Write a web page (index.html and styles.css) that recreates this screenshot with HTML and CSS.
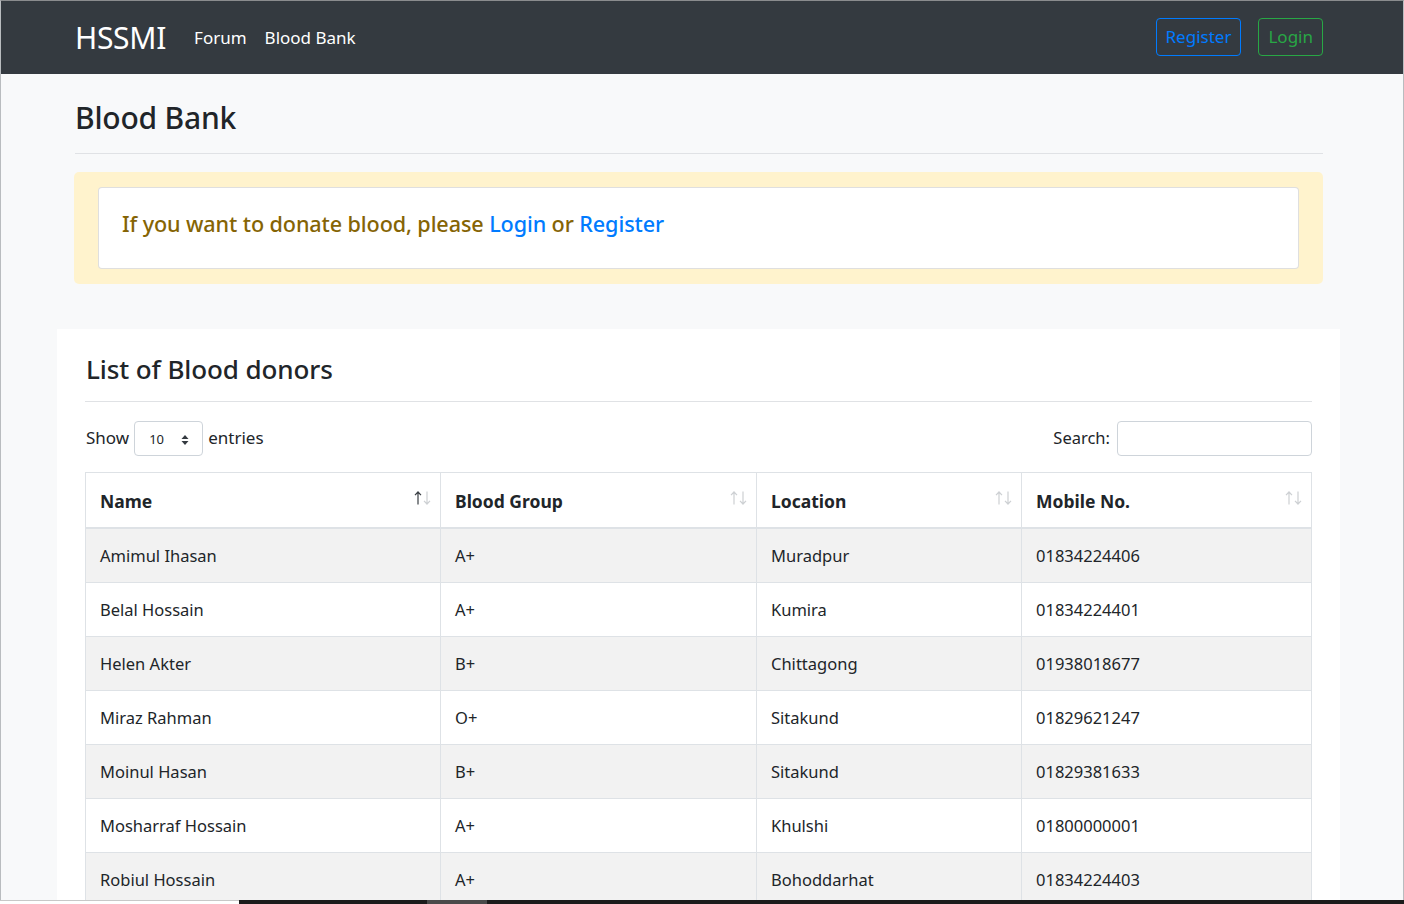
FILE: index.html
```html
<!DOCTYPE html>
<html lang="en">
<head>
<meta charset="utf-8">
<title>HSSMI - Blood Bank</title>
<link rel="stylesheet" href="styles.css">
</head>
<body>
<nav class="navbar">
  <div class="nav-inner">
    <a class="brand" href="#">HSSMI</a>
    <ul class="nav-links">
      <li><a href="#">Forum</a></li>
      <li><a href="#">Blood Bank</a></li>
    </ul>
    <div class="nav-actions">
      <a class="btn btn-blue" href="#">Register</a>
      <a class="btn btn-green" href="#">Login</a>
    </div>
  </div>
</nav>

<main>
  <div class="container">
    <h1 class="page-title">Blood Bank</h1>
    <hr class="rule">
    <div class="alert">
      <div class="alert-card">
        <h4 class="alert-text">If you want to donate blood, please <a href="#">Login</a> or <a href="#">Register</a></h4>
      </div>
    </div>
  </div>

  <section class="panel">
    <h3 class="panel-title">List of Blood donors</h3>
    <hr class="rule">
    <div class="controls">
      <label class="length">Show
        <span class="select">10
          <svg class="select-arrows" width="8" height="12" viewBox="0 0 8 12"><path d="M4 1 L7.5 5 H0.5 Z M4 11 L7.5 7 H0.5 Z" fill="#343a40"/></svg>
        </span>
        entries</label>
      <label class="search">Search: <span class="search-input"></span></label>
    </div>
    <table class="donors">
      <colgroup>
        <col class="c1"><col class="c2"><col class="c3"><col class="c4">
      </colgroup>
      <thead>
        <tr>
          <th class="sorted">Name<svg class="sort" width="17" height="14" viewBox="0 0 17 14"><path class="up" d="M4 13.5 V1 M1 4.2 L4 1 L7 4.2"/><path class="down" d="M13 0.5 V13 M10 9.8 L13 13 L16 9.8"/></svg></th>
          <th>Blood Group<svg class="sort" width="17" height="14" viewBox="0 0 17 14"><path class="up" d="M4 13.5 V1 M1 4.2 L4 1 L7 4.2"/><path class="down" d="M13 0.5 V13 M10 9.8 L13 13 L16 9.8"/></svg></th>
          <th>Location<svg class="sort" width="17" height="14" viewBox="0 0 17 14"><path class="up" d="M4 13.5 V1 M1 4.2 L4 1 L7 4.2"/><path class="down" d="M13 0.5 V13 M10 9.8 L13 13 L16 9.8"/></svg></th>
          <th>Mobile No.<svg class="sort" width="17" height="14" viewBox="0 0 17 14"><path class="up" d="M4 13.5 V1 M1 4.2 L4 1 L7 4.2"/><path class="down" d="M13 0.5 V13 M10 9.8 L13 13 L16 9.8"/></svg></th>
        </tr>
      </thead>
      <tbody>
        <tr><td>Amimul Ihasan</td><td>A+</td><td>Muradpur</td><td>01834224406</td></tr>
        <tr><td>Belal Hossain</td><td>A+</td><td>Kumira</td><td>01834224401</td></tr>
        <tr><td>Helen Akter</td><td>B+</td><td>Chittagong</td><td>01938018677</td></tr>
        <tr><td>Miraz Rahman</td><td>O+</td><td>Sitakund</td><td>01829621247</td></tr>
        <tr><td>Moinul Hasan</td><td>B+</td><td>Sitakund</td><td>01829381633</td></tr>
        <tr><td>Mosharraf Hossain</td><td>A+</td><td>Khulshi</td><td>01800000001</td></tr>
        <tr><td>Robiul Hossain</td><td>A+</td><td>Bohoddarhat</td><td>01834224403</td></tr>
      </tbody>
    </table>
  </section>
</main>

<div class="taskbar"><span class="tb-left"></span><span class="tb-dark"></span><span class="tb-mid"></span><span class="tb-dark2"></span></div>
</body>
</html>
```

FILE: styles.css
```css
* { box-sizing: border-box; }

html, body {
  margin: 0;
  padding: 0;
}

body {
  font-family: "Noto Sans", "Open Sans", sans-serif;
  font-size: 16px;
  line-height: 1.5;
  color: #212529;
  background: #f8f9fa;
  border-top: 1px solid #8a8c8e;
  border-left: 1px solid #b9bcbf;
  border-right: 1px solid #b9bcbf;
  min-height: 904px;
}

a { text-decoration: none; }

/* navbar */
.navbar {
  background: #343a40;
  height: 73px;
}
.nav-inner {
  width: 1248px;
  margin-left: 74px;
  height: 100%;
  display: flex;
  align-items: center;
}
.brand {
  color: #fff;
  font-size: 30px;
  line-height: 1;
  font-weight: 400;
  letter-spacing: -0.3px;
  margin-right: 28px;
  margin-top: 1px;
}
.nav-links {
  list-style: none;
  margin: 0;
  padding: 0;
  display: flex;
  gap: 18px;
}
.nav-links a {
  color: #fff;
  font-size: 17px;
}
.nav-actions {
  margin-left: auto;
  display: flex;
  gap: 17px;
  margin-top: -1px;
}
.btn {
  display: inline-block;
  height: 38px;
  padding: 0 9px;
  line-height: 36px;
  border: 1px solid;
  border-radius: 4px;
  font-size: 17px;
}
.btn-blue { color: #007bff; border-color: #007bff; }
.btn-green { color: #28a745; border-color: #28a745; }

/* header area */
.container {
  width: 1249px;
  margin-left: 73px;
}
.page-title {
  margin: 26px 0 0 1px;
  font-size: 30px;
  line-height: 36px;
  font-weight: 500;
  letter-spacing: -0.2px;
}
.rule {
  border: 0;
  border-top: 1px solid #e0e2e5;
  margin: 0;
}
.container .rule { margin: 17px 0 18px 1px; }

.alert {
  background: #fff3cd;
  border-radius: 5px;
  padding: 15px 24px 15px 24px;
}
.alert-card {
  background: #fff;
  border: 1px solid rgba(0,0,0,.125);
  border-radius: 4px;
  padding: 18px 23px 27px;
}
.alert-text {
  margin: 0;
  font-size: 21.6px;
  line-height: 35px;
  font-weight: 500;
  color: #856404;
  letter-spacing: -0.1px;
}
.alert-text a { color: #007bff; }

/* panel */
.panel {
  background: #fff;
  width: 1283px;
  margin: 45px 0 0 56px;
  padding: 22px 28px 40px 28px;
}
.panel-title {
  margin: 0 0 0 1px;
  font-size: 26px;
  line-height: 36px;
  font-weight: 500;
  letter-spacing: -0.1px;
}
.panel .rule { margin: 14px 0 19px; }

.controls {
  display: flex;
  justify-content: space-between;
  align-items: center;
  height: 35px;
  margin-bottom: 16px;
}
.length, .search {
  display: flex;
  align-items: center;
  font-weight: 400;
  font-size: 17px;
}
.length { margin-left: 1px; margin-top: -2px; }
.search { font-size: 16.5px; }
.select {
  display: inline-flex;
  align-items: center;
  justify-content: space-between;
  width: 69px;
  height: 35px;
  margin: 2px 5px 0 5px;
  padding: 3px 13px 0 14px;
  border: 1px solid #ced4da;
  border-radius: 4px;
  font-size: 13px;
}
.search-input {
  display: inline-block;
  width: 195px;
  height: 35px;
  margin-left: 7px;
  border: 1px solid #ced4da;
  border-radius: 4px;
}

/* table */
.donors {
  width: 1226px;
  table-layout: fixed;
  border-collapse: collapse;
  border: 1px solid #dee2e6;
}
.c1 { width: 355px; }
.c2 { width: 316px; }
.c3 { width: 265px; }
.c4 { width: 290px; }
.donors th, .donors td {
  border: 1px solid #dee2e6;
  text-align: left;
  padding: 15px 14px 14px 14px;
  line-height: 24px;
}
.donors th {
  position: relative;
  font-weight: 700;
  font-size: 17.5px;
  border-bottom: 2px solid #dee2e6;
  padding: 16px 14px 14px 14px;
}
.donors td { font-size: 16.5px; }
.donors tbody tr:nth-child(odd) { background: #f2f2f2; }

.sort {
  position: absolute;
  right: 9px;
  top: 18px;
  fill: none;
  stroke-width: 1.2;
}
.sort .up, .sort .down { stroke: #cdd0d3; }
.sorted .sort .up { stroke: #3a3f44; }

/* screenshot frame bottom */
.taskbar {
  position: fixed;
  left: 0;
  right: 0;
  bottom: 0;
  height: 4px;
  display: flex;
}
.tb-left { width: 239px; background: #fff; border-top: 1px solid #c8c8c8; }
.tb-dark { width: 188px; background: #1b1b1b; }
.tb-mid { width: 60px; background: #4a4a4a; }
.tb-dark2 { flex: 1; background: #1b1b1b; }
```
